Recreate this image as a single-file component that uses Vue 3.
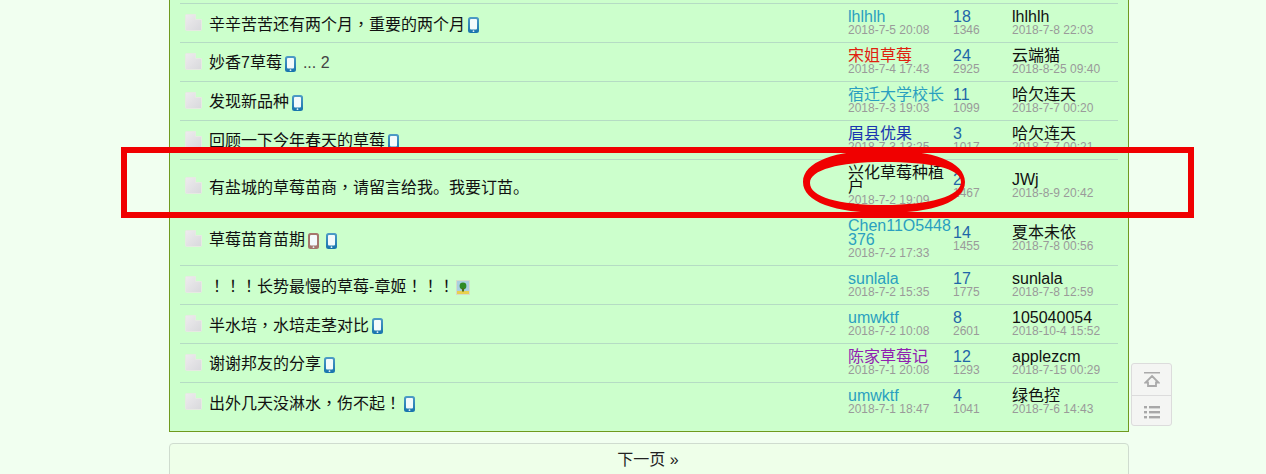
<template>
  <div class="page">
    <div class="threadlist">
      <div v-for="t in threads" :key="t.title" class="row">
        <div class="icn">
          <svg width="17" height="17" viewBox="0 0 17 17">
            <path d="M.5 1.5Q.5.5 1.5.5H10.5V5.5H16.5V15.5Q16.5 16.5 15.5 16.5H1.5Q.5 16.5.5 15.5Z" fill="url(#docFill)" stroke="#e6eae2" />
          </svg>
        </div>
        <div class="subject">
          <span class="title">
            <template v-for="(part, i) in splitTitle(t.title)" :key="i">
              <span v-if="part === '，' || part === '！'" class="punct">{{ part }}</span>
              <template v-else>{{ part }}</template>
            </template>
          </span>
          <template v-for="(m, i) in t.marks" :key="i">
            <svg v-if="m === 'img'" class="mark-img" width="14" height="15" viewBox="0 0 14 15">
              <rect x=".5" y=".5" width="13" height="14" fill="#a9cfe0" stroke="#d5dcc8" />
              <rect x="1" y="11" width="12" height="3" fill="#e8d050" />
              <circle cx="7" cy="6" r="3.4" fill="#2f8a25" />
              <rect x="6" y="8" width="2" height="3.5" fill="#4f6a1a" />
            </svg>
            <svg v-else class="mark-phone" width="11" height="16" viewBox="0 0 11 16">
              <rect width="11" height="16" rx="2.5" :fill="m === 'red' ? '#a5766c' : 'url(#phoneFill)'" />
              <rect x="2" y="2" width="7" height="10.5" rx="1" fill="#f4fafc" />
              <circle cx="5.5" cy="14.2" r=".9" fill="#dfeef6" />
            </svg>
          </template>
          <span v-if="t.pages" class="pages">... {{ t.pages }}</span>
        </div>
        <div class="by">
          <div class="name" :style="{ color: t.color }">{{ t.author }}</div>
          <div class="date">{{ t.posted }}</div>
        </div>
        <div class="num">
          <div class="replies">{{ t.replies }}</div>
          <div class="date">{{ t.views }}</div>
        </div>
        <div class="last">
          <div class="name">{{ t.lastUser }}</div>
          <div class="date">{{ t.lastDate }}</div>
        </div>
      </div>
    </div>

    <a class="next-page">下一页 »</a>

    <div class="side-tools">
      <div class="tool">
        <svg width="16" height="15" viewBox="0 0 16 15">
          <rect y="0" width="16" height="1.5" fill="#aaa" />
          <path d="M8 4 14.5 10.5H12V14H4V10.5H1.5Z" fill="none" stroke="#aaa" stroke-width="1.8" />
        </svg>
      </div>
      <div class="tool">
        <svg width="16" height="14" viewBox="0 0 16 14">
          <g fill="#a8a8a8">
            <rect y="1" width="3" height="2.4" />
            <rect x="5" y="1" width="11" height="2.4" />
            <rect y="6" width="3" height="2.4" />
            <rect x="5" y="6" width="11" height="2.4" />
            <rect y="11" width="3" height="2.4" />
            <rect x="5" y="11" width="11" height="2.4" />
          </g>
        </svg>
      </div>
    </div>

    <svg class="annotation" width="1266" height="474" viewBox="0 0 1266 474">
      <defs>
        <linearGradient id="docFill" x1="0" y1="0" x2="1" y2="1">
          <stop offset="0" stop-color="#eeecee" />
          <stop offset="1" stop-color="#d8d8dc" />
        </linearGradient>
        <linearGradient id="phoneFill" x1="0" y1="0" x2="0" y2="1">
          <stop offset="0" stop-color="#4f9cc6" />
          <stop offset="1" stop-color="#1673ad" />
        </linearGradient>
      </defs>
      <rect x="124" y="150" width="1067" height="65" fill="none" stroke="#f00000" stroke-width="6" />
      <!-- hand drawn ring: thin on the right, so it is two outlines rather than a stroke -->
      <path
        fill="#f00000"
        fill-rule="evenodd"
        d="M803 182C803 162 835 150 884 150C933 150 965 162 965 182C965 202 933 213 884 213C835 213 803 202 803 182ZM810 183C810 170 838 162 884 162C930 162 961 168 961 182C961 196 930 205 884 205C838 205 810 197 810 183Z"
      />
    </svg>
  </div>
</template>

<script setup>
const cyan = '#2a9fc0'

const threads = [
  { title: '辛辛苦苦还有两个月，重要的两个月', marks: ['blue'], author: 'lhlhlh', color: cyan, posted: '2018-7-5 20:08', replies: 18, views: 1346, lastUser: 'lhlhlh', lastDate: '2018-7-8 22:03' },
  { title: '妙香7草莓', marks: ['blue'], pages: 2, author: '宋姐草莓', color: '#e0200f', posted: '2018-7-4 17:43', replies: 24, views: 2925, lastUser: '云端猫', lastDate: '2018-8-25 09:40' },
  { title: '发现新品种', marks: ['blue'], author: '宿迁大学校长', color: cyan, posted: '2018-7-3 19:03', replies: 11, views: 1099, lastUser: '哈欠连天', lastDate: '2018-7-7 00:20' },
  { title: '回顾一下今年春天的草莓', marks: ['blue'], author: '眉县优果', color: '#1a35b0', posted: '2018-7-3 13:25', replies: 3, views: 1017, lastUser: '哈欠连天', lastDate: '2018-7-7 00:21' },
  { title: '有盐城的草莓苗商，请留言给我。我要订苗。', marks: [], author: '兴化草莓种植户', color: '#111', posted: '2018-7-2 19:09', replies: 2, views: 1467, lastUser: 'JWj', lastDate: '2018-8-9 20:42' },
  { title: '草莓苗育苗期', marks: ['red', 'blue'], author: 'Chen11O5448376', color: cyan, posted: '2018-7-2 17:33', replies: 14, views: 1455, lastUser: '夏本未依', lastDate: '2018-7-8 00:56' },
  { title: '！！！长势最慢的草莓-章姬！！！', marks: ['img'], author: 'sunlala', color: cyan, posted: '2018-7-2 15:35', replies: 17, views: 1775, lastUser: 'sunlala', lastDate: '2018-7-8 12:59' },
  { title: '半水培，水培走茎对比', marks: ['blue'], author: 'umwktf', color: cyan, posted: '2018-7-2 10:08', replies: 8, views: 2601, lastUser: '105040054', lastDate: '2018-10-4 15:52' },
  { title: '谢谢邦友的分享', marks: ['blue'], author: '陈家草莓记', color: '#9020b0', posted: '2018-7-1 20:08', replies: 12, views: 1293, lastUser: 'applezcm', lastDate: '2018-7-15 00:29' },
  { title: '出外几天没淋水，伤不起！', marks: ['blue'], author: 'umwktf', color: cyan, posted: '2018-7-1 18:47', replies: 4, views: 1041, lastUser: '绿色控', lastDate: '2018-7-6 14:43' },
]

// the forum font centres these two marks, the TC face does the same
function splitTitle(title) {
  return title.split(/([，！])/).filter(Boolean)
}
</script>

<style>
html, body { margin: 0; height: 474px; overflow: hidden; background: #f1fff0; }
</style>

<style scoped>
.page { position: relative; width: 1266px; height: 474px; overflow: hidden; font-family: "Liberation Sans", "Noto Sans CJK SC", sans-serif; color: #111; }
.threadlist { box-sizing: border-box; width: 960px; margin-left: 169px; padding: 3px 10px 10px; background: #ccffcc; border: 1px solid #6f9a1e; border-top: none; }
.row { display: flex; align-items: center; border-top: 1px solid #b5dcc4; padding: 5px 0; }
.icn { width: 29px; flex: none; padding-left: 5px; box-sizing: border-box; display: flex; margin-top: -2px; }
.subject { flex: 1; display: flex; align-items: center; font-size: 16px; line-height: 20px; padding-top: 1px; }
.title { white-space: nowrap; }
.punct { font-family: "Noto Sans CJK TC", sans-serif; }
.mark-phone { margin: 2px 0 0 3px; }
.mark-phone + .mark-phone { margin-left: 7px; }
.mark-img { margin: 3px 0 0 2px; }
.pages { margin-left: 7px; color: #444; }
.by { width: 105px; flex: none; }
.num { width: 59px; flex: none; }
.last { width: 106px; flex: none; }
.name, .replies { font-size: 16px; line-height: 14px; word-break: break-all; padding-top: 1px; margin-bottom: -1px; }
.replies { color: #1f66a8; }
.date { font-size: 12px; line-height: 14px; color: #9a9a9a; white-space: nowrap; }
.next-page { display: block; box-sizing: border-box; width: 960px; height: 50px; margin: 11px 0 0 169px; padding-right: 2px; border: 1px solid #cfdccf; border-radius: 4px; background: #eeffe9; text-align: center; font-size: 16px; line-height: 31px; color: #222; }
.side-tools { position: absolute; left: 1131px; top: 363px; width: 41px; height: 63px; box-sizing: border-box; border: 1px solid #dcdcdc; border-radius: 3px; background: #f4f5f3; }
.tool { height: 31px; display: flex; align-items: center; justify-content: center; }
.tool + .tool { border-top: 1px solid #dcdcdc; }
.annotation { position: absolute; left: 0; top: 0; }
</style>
